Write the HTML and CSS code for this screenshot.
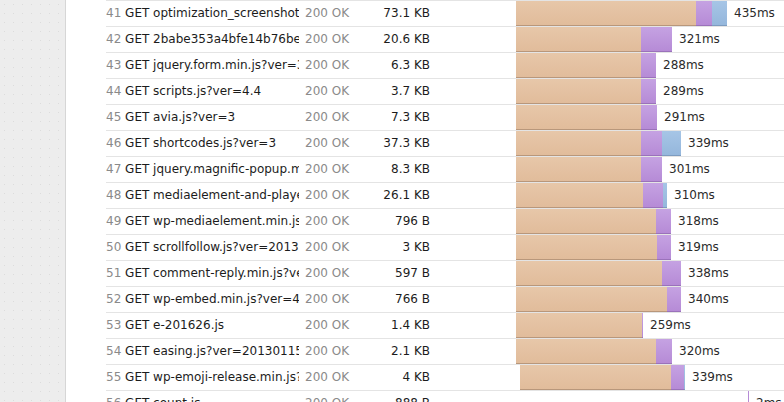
FILE: index.html
```html
<!DOCTYPE html>
<html>
<head>
<meta charset="utf-8">
<link rel="stylesheet" href="styles.css">
</head>
<body>
<div class="app">
  <aside class="sidebar"></aside>
  <main class="list">
    <div class="row"><div class="name"><span class="num">41</span> GET optimization_screenshot.png</div><div class="status">200 OK</div><div class="size">73.1 KB</div><div class="timeline"><div class="bar"><span class="seg wait" style="width:180px"></span><span class="seg recv" style="width:16px"></span><span class="seg blue" style="width:15px"></span></div><span class="ms">435ms</span></div></div>
    <div class="row"><div class="name"><span class="num">42</span> GET 2babe353a4bfe14b76be5e.js</div><div class="status">200 OK</div><div class="size">20.6 KB</div><div class="timeline"><div class="bar"><span class="seg wait" style="width:125px"></span><span class="seg recv" style="width:31px"></span></div><span class="ms">321ms</span></div></div>
    <div class="row"><div class="name"><span class="num">43</span> GET jquery.form.min.js?ver=3.51</div><div class="status">200 OK</div><div class="size">6.3 KB</div><div class="timeline"><div class="bar"><span class="seg wait" style="width:125px"></span><span class="seg recv" style="width:15px"></span></div><span class="ms">288ms</span></div></div>
    <div class="row"><div class="name"><span class="num">44</span> GET scripts.js?ver=4.4</div><div class="status">200 OK</div><div class="size">3.7 KB</div><div class="timeline"><div class="bar"><span class="seg wait" style="width:125px"></span><span class="seg recv" style="width:15px"></span></div><span class="ms">289ms</span></div></div>
    <div class="row"><div class="name"><span class="num">45</span> GET avia.js?ver=3</div><div class="status">200 OK</div><div class="size">7.3 KB</div><div class="timeline"><div class="bar"><span class="seg wait" style="width:125px"></span><span class="seg recv" style="width:16px"></span></div><span class="ms">291ms</span></div></div>
    <div class="row"><div class="name"><span class="num">46</span> GET shortcodes.js?ver=3</div><div class="status">200 OK</div><div class="size">37.3 KB</div><div class="timeline"><div class="bar"><span class="seg wait" style="width:125px"></span><span class="seg recv" style="width:21px"></span><span class="seg blue" style="width:19px"></span></div><span class="ms">339ms</span></div></div>
    <div class="row"><div class="name"><span class="num">47</span> GET jquery.magnific-popup.min.js</div><div class="status">200 OK</div><div class="size">8.3 KB</div><div class="timeline"><div class="bar"><span class="seg wait" style="width:125px"></span><span class="seg recv" style="width:21px"></span></div><span class="ms">301ms</span></div></div>
    <div class="row"><div class="name"><span class="num">48</span> GET mediaelement-and-player.min.js</div><div class="status">200 OK</div><div class="size">26.1 KB</div><div class="timeline"><div class="bar"><span class="seg wait" style="width:127px"></span><span class="seg recv" style="width:20px"></span><span class="seg blue" style="width:4px"></span></div><span class="ms">310ms</span></div></div>
    <div class="row"><div class="name"><span class="num">49</span> GET wp-mediaelement.min.js?ver=4</div><div class="status">200 OK</div><div class="size">796 B</div><div class="timeline"><div class="bar"><span class="seg wait" style="width:140px"></span><span class="seg recv" style="width:15px"></span></div><span class="ms">318ms</span></div></div>
    <div class="row"><div class="name"><span class="num">50</span> GET scrollfollow.js?ver=20130115</div><div class="status">200 OK</div><div class="size">3 KB</div><div class="timeline"><div class="bar"><span class="seg wait" style="width:141px"></span><span class="seg recv" style="width:14px"></span></div><span class="ms">319ms</span></div></div>
    <div class="row"><div class="name"><span class="num">51</span> GET comment-reply.min.js?ver=4.4</div><div class="status">200 OK</div><div class="size">597 B</div><div class="timeline"><div class="bar"><span class="seg wait" style="width:146px"></span><span class="seg recv" style="width:19px"></span></div><span class="ms">338ms</span></div></div>
    <div class="row"><div class="name"><span class="num">52</span> GET wp-embed.min.js?ver=4.4</div><div class="status">200 OK</div><div class="size">766 B</div><div class="timeline"><div class="bar"><span class="seg wait" style="width:151px"></span><span class="seg recv" style="width:14px"></span></div><span class="ms">340ms</span></div></div>
    <div class="row"><div class="name"><span class="num">53</span> GET e-201626.js</div><div class="status">200 OK</div><div class="size">1.4 KB</div><div class="timeline"><div class="bar"><span class="seg wait" style="width:126px"></span><span class="seg recv" style="width:1px"></span></div><span class="ms">259ms</span></div></div>
    <div class="row"><div class="name"><span class="num">54</span> GET easing.js?ver=20130115</div><div class="status">200 OK</div><div class="size">2.1 KB</div><div class="timeline"><div class="bar"><span class="seg wait" style="width:140px"></span><span class="seg recv" style="width:16px"></span></div><span class="ms">320ms</span></div></div>
    <div class="row"><div class="name"><span class="num">55</span> GET wp-emoji-release.min.js?ver=4.4</div><div class="status">200 OK</div><div class="size">4 KB</div><div class="timeline"><div class="bar" style="margin-left:4px"><span class="seg wait" style="width:151px"></span><span class="seg recv" style="width:13px"></span><span class="seg blue" style="width:1px"></span></div><span class="ms">339ms</span></div></div>
    <div class="row"><div class="name"><span class="num">56</span> GET count.js</div><div class="status">200 OK</div><div class="size">888 B</div><div class="timeline"><div class="bar" style="margin-left:232px"><span class="seg recv thin" style="width:1px"></span></div><span class="ms">2ms</span></div></div>
  </main>
</div>
</body>
</html>
```
FILE: styles.css
```css
html, body {
  margin: 0;
  padding: 0;
  background: #ffffff;
  overflow: hidden;
}
.app {
  display: flex;
  width: 784px;
  height: 402px;
  overflow: hidden;
  font-family: "DejaVu Sans", sans-serif;
  font-size: 12px;
}
.sidebar {
  flex: 0 0 65px;
  border-right: 1px solid #d6d6d6;
  background-color: #ededed;
  background-image: radial-gradient(circle, #dcdcdc 0.6px, transparent 0.9px);
  background-size: 9px 9px;
}
.list {
  flex: 1;
  padding-left: 40px;
  display: flex;
  flex-direction: column;
}
.row {
  flex: 0 0 26px;
  height: 26px;
  box-sizing: border-box;
  border-top: 1px solid #e4e4e4;
  display: flex;
  align-items: stretch;
  white-space: nowrap;
}
.name {
  width: 193px;
  margin-right: 6px;
  overflow: hidden;
  color: #1c1c1c;
  line-height: 25px;
}
.num {
  color: #8a8a8a;
}
.status {
  width: 60px;
  color: #8a8a8a;
  line-height: 25px;
}
.size {
  width: 65px;
  text-align: right;
  color: #1c1c1c;
  line-height: 25px;
}
.timeline {
  margin-left: 86px;
  display: flex;
  align-items: stretch;
  flex: 1;
}
.bar {
  display: flex;
  height: 25px;
}
.seg {
  display: block;
  height: 24px;
  border-bottom: 1px solid #b8977b;
}
.wait {
  background: linear-gradient(#e7c7a9, #e1bc9b);
}
.recv {
  background: linear-gradient(#c5a2e2, #b68bd6);
  border-bottom-color: #9a72ba;
}
.blue {
  background: linear-gradient(#a6c5e6, #95b7dc);
  border-bottom-color: #7d9cc0;
}
.thin {
  border-bottom: none;
  height: 25px;
  background: #b68bd6;
}
.ms {
  margin-left: 7px;
  color: #2a2a2a;
  line-height: 25px;
}
```
